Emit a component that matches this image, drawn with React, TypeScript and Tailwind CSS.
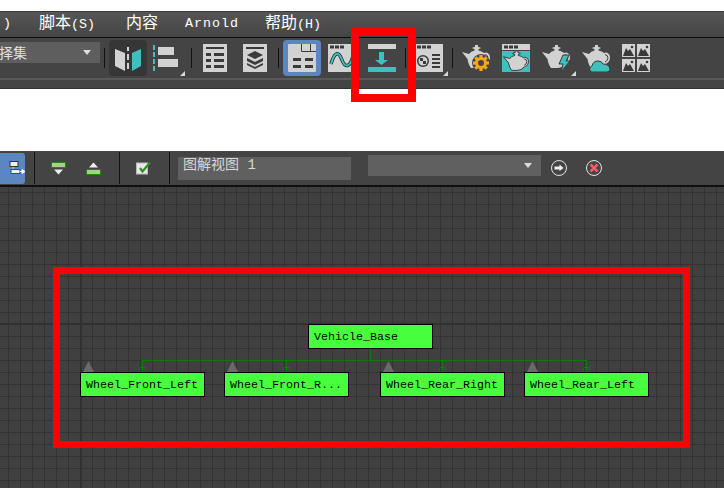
const G = "#d2d2d2";
const T = "#3fc0bf";
const D = "#3a3a3a";

function Sep() {
  return <div className="w-px h-[20px] bg-[#111111] shrink-0" />;
}

function Corner() {
  return <div className="absolute right-[-5px] bottom-[-4px] w-0 h-0 border-l-[5px] border-l-transparent border-b-[5px] border-b-[#d8d8d8]" />;
}

function Ico({ w = 28, children, corner }: { w?: number; children: React.ReactNode; corner?: boolean }) {
  return (
    <div className="relative shrink-0 h-[28px]" style={{ width: w }}>
      <svg width={w} height={28} viewBox={`0 0 ${w} 28`}>{children}</svg>
      {corner && <Corner />}
    </div>
  );
}

const teapot = "M0 8 L7 10 Q9 7 12.5 6.5 L12.5 5 L10.5 4.5 L10.5 3.5 L13 3 L13 1 L16 1 L16 3 L18.5 3.5 L18.5 4.5 L16.5 5 L16.5 6.5 Q20 7 22 9 L24 8.5 Q28 9 28 14 Q27.5 19 23 20 Q20 24 15 24 L9 24 Q6.5 21 5.5 15 Z";
const handle = "M23 10.5 Q26 11 26 14 Q25.5 17 23 18";

function TitleBar() {
  return (
    <>
      <rect x="0" y="0" width="28" height="6" fill={G} />
      <rect x="2" y="1.5" width="4" height="3" fill={D} />
      <rect x="7" y="1.5" width="4" height="3" fill={D} />
      <rect x="12" y="1.5" width="4" height="3" fill={D} />
    </>
  );
}

function Mountain({ x, y }: { x: number; y: number }) {
  return (
    <g transform={`translate(${x} ${y})`}>
      <rect width="13" height="13" fill={G} />
      <path d="M1 12 L4 4 L6 7 L8 5 L12 12 Z" fill={D} />
      <circle cx="10" cy="3" r="1.3" fill={D} />
    </g>
  );
}

function Gear({ cx, cy }: { cx: number; cy: number }) {
  return (
    <g transform={`translate(${cx} ${cy})`}>
      <circle r="9" fill="#444444" />
      {[0, 45, 90, 135].map((a) => (
        <rect key={a} x="-1.6" y="-8" width="3.2" height="16" fill="#f5a81c" transform={`rotate(${a})`} />
      ))}
      <circle r="4.5" fill="none" stroke="#f5a81c" strokeWidth="3" />
      <circle r="3" fill="#444444" />
    </g>
  );
}

function MenuBar() {
  const zh = "text-[16px]";
  return (
    <div className="h-[27px] pb-[2px] bg-gradient-to-b from-[#565656] to-[#454545] border-t border-t-[#3a3a3a] border-b border-b-[#0d0d0d] flex items-center text-white text-[13.33px] leading-none [font-family:'Liberation_Mono','Noto_Sans_CJK_SC',monospace] shrink-0 relative overflow-hidden">
      <span className="ml-[3px] w-[36px]">)</span>
      <span className="w-[87px] whitespace-nowrap"><span className={zh}>脚本</span>(S)</span>
      <span className="w-[59px] whitespace-nowrap"><span className={zh}>内容</span></span>
      <span className="w-[80px] tracking-[1px]">Arnold</span>
      <span className="whitespace-nowrap"><span className={zh}>帮助</span>(H)</span>
    </div>
  );
}

function MainToolbar() {
  return (
    <div className="h-[40px] bg-[#444444] flex items-center shrink-0">
      <div className="w-[100px] h-[21px] mb-[11px] bg-[#5e5e5e] flex items-center justify-between pr-[9px] text-[14px] text-[#e0e0e0] overflow-hidden [font-family:'Noto_Sans_CJK_SC',sans-serif] shrink-0">
        <span className="ml-[-1px]">择集</span>
        <span className="w-0 h-0 border-x-[4px] border-x-transparent border-t-[5px] border-t-[#dddddd]" />
      </div>
      <div className="ml-[4px]"><Sep /></div>
      <div className="ml-[4px] w-[38px] h-[36px] rounded-[4px] bg-[#363636] flex items-center justify-center shrink-0">
        <Ico>
          <path d="M1 5 L11 9 L11 27 L1 22 Z" fill={G} />
          <path d="M14 3 v4 M14 10 v6 M14 19 v6" stroke={G} strokeWidth="2" fill="none" />
          <path d="M27 5 L18 9 L18 27 L27 22 Z" fill={T} />
        </Ico>
      </div>
      <div className="ml-[5px]">
        <Ico w={28} corner>
          <path d="M2 1 v26" stroke={T} strokeWidth="2" strokeDasharray="5 2" />
          <rect x="6" y="3" width="16" height="8" fill={G} />
          <rect x="6" y="15" width="20" height="8" fill={G} />
        </Ico>
      </div>
      <div className="ml-[11px]"><Sep /></div>
      <div className="ml-[11px]">
        <Ico w={24}>
          <rect width="24" height="28" fill={G} />
          <rect x="3" y="3" width="18" height="2" fill={D} />
          <path d="M3 9 h5 v3 h-5z M11 9 h10 v3 h-10z M3 15 h5 v3 h-5z M11 15 h10 v3 h-10z M3 21 h5 v3 h-5z M11 21 h10 v3 h-10z" fill={D} />
        </Ico>
      </div>
      <div className="ml-[16px]">
        <Ico w={24}>
          <rect width="24" height="28" fill={G} />
          <rect x="3" y="3" width="18" height="2" fill={D} />
          <path d="M12 7 L20 11 L12 15 L4 11 Z M4 14 L12 18 L20 14 V17 L12 21 L4 17 Z M4 19 L12 23 L20 19 V21 L12 25 L4 21 Z" fill={D} />
        </Ico>
      </div>
      <div className="ml-[11px]"><Sep /></div>
      <div className="ml-[4px] w-[38px] h-[36px] rounded-[4px] bg-[#5b86c0] flex items-center justify-center shrink-0">
        <Ico>
          <rect width="28" height="28" rx="1" fill={G} />
          <path d="M13.5 0 V7.5 H28 M22.5 0 V7.5" fill="none" stroke={D} strokeWidth="1" />
          <path d="M5 14 h8 v3 h-8z M17 14 h8 v3 h-8z M5 21 h8 v3 h-8z M17 21 h8 v3 h-8z" fill={D} />
        </Ico>
      </div>
      <div className="ml-[7px]">
        <Ico w={28}>
          <TitleBar />
          <rect y="6" width="28" height="22" fill={G} />
          <path d="M3 20 C7 6 11 8 14 16 C17 24 22 24 25 12" fill="none" stroke="#222222" strokeWidth="3.5" />
          <path d="M3 20 C7 6 11 8 14 16 C17 24 22 24 25 12" fill="none" stroke={T} strokeWidth="2" />
        </Ico>
      </div>
      <div className="ml-[11px]">
        <Ico w={29}>
          <rect x="1" y="0" width="28" height="5" fill={G} />
          <path d="M12 8 h5 v8 h4 L14.5 21 L8 16 h4 Z" fill={T} />
          <rect x="1" y="23" width="28" height="5" fill={T} />
        </Ico>
      </div>
      <div className="ml-[9px]"><Sep /></div>
      <div className="ml-[9px]">
        <Ico corner>
          <TitleBar />
          <rect y="6" width="28" height="22" fill={G} />
          <circle cx="8" cy="17" r="6" fill={D} />
          <circle cx="8" cy="17" r="4.5" fill={G} />
          <path d="M5 14 h3 v3 h-3z M8 17 h3 v3 h-3z" fill={D} />
          <path d="M17 10 h8 v2 h-8z M17 14 h8 v2 h-8z M17 18 h8 v2 h-8z M17 22 h8 v2 h-8z" fill={D} />
        </Ico>
      </div>
      <div className="ml-[9px]"><Sep /></div>
      <div className="ml-[9px]">
        <Ico>
          <path d={teapot} fill={G} />
          <path d={handle} fill="none" stroke={D} strokeWidth="1" />
          <Gear cx={19} cy={19} />
        </Ico>
      </div>
      <div className="ml-[12px]">
        <Ico>
          <TitleBar />
          <rect y="7" width="28" height="21" fill={T} />
          <g transform="translate(1.5 6) scale(0.9 0.85)">
            <path d={teapot} fill={G} stroke="#2d2d2d" strokeWidth="1" />
            <path d={handle} fill="none" stroke="#2d2d2d" strokeWidth="1" />
          </g>
        </Ico>
      </div>
      <div className="ml-[12px]">
        <Ico w={29} corner>
          <path d={teapot} fill={G} />
          <path d={handle} fill="none" stroke={D} strokeWidth="1" />
          <path d="M21 11 L27 11 L24 17 L28 17 L19 28 L21 20 L17 20 Z" fill={T} stroke="#3a3a3a" strokeWidth="1" />
        </Ico>
      </div>
      <div className="ml-[11px]">
        <Ico>
          <path d={teapot} fill={G} />
          <path d={handle} fill="none" stroke={D} strokeWidth="1" />
          <path d="M9 28 Q6 24 10 22 Q11 17 16 17 Q20 17 21 20 Q27 20 28 25 Q28 28 25 28 Z" fill={T} stroke="#3a3a3a" strokeWidth="1" />
        </Ico>
      </div>
      <div className="ml-[12px]">
        <Ico>
          <Mountain x={0} y={0} />
          <Mountain x={15} y={0} />
          <Mountain x={0} y={15} />
          <Mountain x={15} y={15} />
        </Ico>
      </div>
    </div>
  );
}

function SchematicToolbar() {
  return (
    <div className="h-[36px] bg-[#444444] border-b-2 border-b-[#0f0f0f] flex items-center shrink-0 relative">
      <div className="w-[25px] h-[31px] rounded-r-[3px] bg-[#5b86c0] flex items-center justify-end shrink-0">
        <svg width="17" height="14" viewBox="0 0 17 14">
          <rect x="2" y="0.5" width="8" height="5" fill="#eeeeee" stroke="#333333" />
          <rect x="3" y="8.5" width="9" height="4" fill="#eeeeee" stroke="#1d4f9a" />
          <path d="M5 6 v2" stroke="#dddddd" />
          <path d="M12 10.5 h2 M14 8.5 L17 10.5 L14 12.5 Z" stroke="#ffffff" fill="#ffffff" />
        </svg>
      </div>
      <div className="ml-[9px] w-px h-[32px] bg-[#111111]" />
      <div className="ml-[16px]">
        <svg width="15" height="13" viewBox="0 0 15 13">
          <rect x="0.5" y="0.5" width="14" height="5" fill="#9ed483" stroke="#2e7d16" />
          <path d="M3 7.5 h9 L7.5 12.5 Z" fill="#eeeeee" />
        </svg>
      </div>
      <div className="ml-[20px]">
        <svg width="15" height="13" viewBox="0 0 15 13">
          <path d="M3 5.5 h9 L7.5 0.5 Z" fill="#eeeeee" />
          <rect x="0.5" y="7.5" width="14" height="5" fill="#9ed483" stroke="#2e7d16" />
        </svg>
      </div>
      <div className="ml-[18px] w-px h-[32px] bg-[#111111]" />
      <div className="ml-[16px]">
        <svg width="16" height="14" viewBox="0 0 16 14">
          <rect x="0.5" y="2" width="11" height="11" fill="#e8e8e8" stroke="#bbbbbb" />
          <path d="M4 7 L6.5 10.5 L14 1.5" fill="none" stroke="#2f8f1c" strokeWidth="2.2" />
        </svg>
      </div>
      <div className="ml-[17px] w-px h-[32px] bg-[#111111]" />
      <div className="ml-[8px] w-[173px] h-[23px] mt-[1px] bg-[#606060] pl-[5px] text-[#d8d8d8] text-[14px] leading-[16px] whitespace-nowrap [font-family:'Liberation_Mono','Noto_Sans_CJK_SC',monospace]">图解视图 1</div>
      <div className="ml-[17px] w-[173px] h-[21px] mb-[5px] bg-[#606060] flex items-center justify-end pr-[9px]">
        <span className="w-0 h-0 border-x-[4px] border-x-transparent border-t-[5px] border-t-[#dddddd]" />
      </div>
      <div className="ml-[10px]">
        <svg width="16" height="16" viewBox="0 0 16 16">
          <circle cx="8" cy="8" r="7.5" fill="none" stroke="#e6e6e6" />
          <path d="M3.5 6.5 h5 V4.5 L12.5 8 L8.5 11 V9.5 h-5 Z" fill="#eeeeee" />
        </svg>
      </div>
      <div className="ml-[19px]">
        <svg width="16" height="16" viewBox="0 0 16 16">
          <circle cx="8" cy="8" r="7.5" fill="none" stroke="#e6e6e6" />
          <path d="M4.5 4.5 L11.5 11.5 M11.5 4.5 L4.5 11.5" stroke="#f25a64" strokeWidth="2.6" />
        </svg>
      </div>
    </div>
  );
}

const wheels = [
  { x: 80, label: "Wheel_Front_Left" },
  { x: 224, label: "Wheel_Front_R..." },
  { x: 380, label: "Wheel_Rear_Right" },
  { x: 524, label: "Wheel_Rear_Left" },
];

function Node({ x, y, label }: { x: number; y: number; label: string }) {
  return (
    <div
      className="absolute w-[125px] h-[25px] bg-[#47ff3d] border border-black pl-[5px] text-black text-[11.67px] leading-[25px] whitespace-nowrap [font-family:'Liberation_Mono',monospace]"
      style={{ left: x, top: y - 187 }}
    >
      {label}
    </div>
  );
}

function Canvas() {
  return (
    <div className="flex-1 relative overflow-hidden bg-[#404040] bg-[linear-gradient(to_right,#333333_1px,transparent_1px),linear-gradient(to_bottom,#333333_1px,transparent_1px)] bg-[size:12px_12px] bg-[position:8px_5px]">
      <div className="absolute left-[80px] top-0 bottom-0 w-[2px] bg-[#313131]" />
      <div className="absolute left-0 right-0 top-[136px] h-[2px] bg-[#313131]" />
      <svg className="absolute left-0 top-0" width="724" height="301" viewBox="0 187 724 301">
        <g stroke="#0b7a0b" fill="none" shapeRendering="crispEdges">
          <path d="M142 360.5 H587" />
          <path d="M370.5 349 V360" />
          {[142, 286, 442, 586].map((x) => (
            <g key={x}>
              <path d={`M${x + 0.5} 361 V372`} />
              <path d={`M${x - 2.5} 367.5 h6 M${x - 2.5} 367.5 v3 M${x + 3.5} 367.5 v3`} />
            </g>
          ))}
        </g>
        {[83, 227, 383, 527].map((x) => (
          <path key={x} d={`M${x} 372 L${x + 5.5} 361 L${x + 11} 372 Z`} fill="#6a6a6a" />
        ))}
      </svg>
      <Node x={308} y={324} label="Vehicle_Base" />
      {wheels.map((w) => (
        <Node key={w.x} x={w.x} y={372} label={w.label} />
      ))}
    </div>
  );
}

export default function App() {
  return (
    <div className="relative w-[724px] h-[488px] overflow-hidden bg-white flex flex-col">
      <div className="h-[11px] shrink-0" />
      <MenuBar />
      <MainToolbar />
      <div className="h-[11px] bg-[#444444] border-t-2 border-t-[#595959] border-b border-b-[#333333] shrink-0" />
      <div className="h-[62px] bg-white shrink-0" />
      <SchematicToolbar />
      <Canvas />
      <div className="absolute left-[351px] top-[28px] w-[65px] h-[74px] border-8 border-[#ff0000]" />
      <div className="absolute left-[53px] top-[267px] w-[637px] h-[181px] border-[7px] border-[#ff0000]" />
    </div>
  );
}
